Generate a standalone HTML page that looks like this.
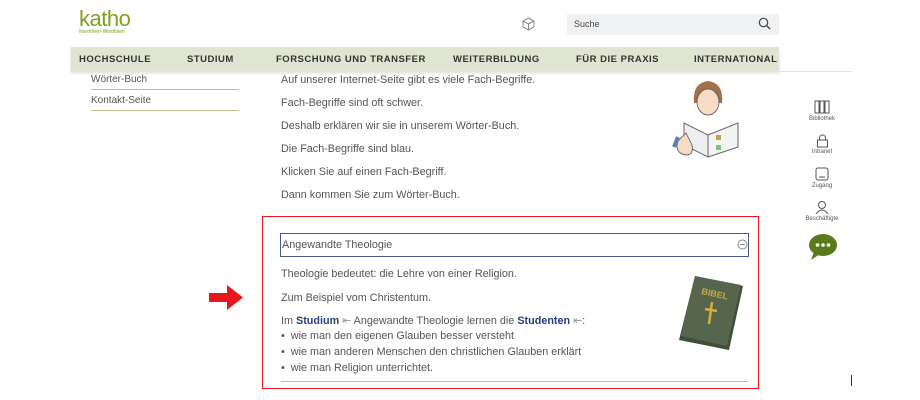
<!DOCTYPE html>
<html><head><meta charset="utf-8"><style>
*{margin:0;padding:0;box-sizing:border-box}
body{width:920px;height:400px;background:#fff;font-family:"Liberation Sans",sans-serif;color:#555;position:relative;overflow:hidden}
.a{position:absolute;white-space:nowrap}
.nav{position:absolute;left:71px;top:47px;width:708px;height:24px;background:#e0e5d2;box-shadow:0 2px 3px rgba(0,0,0,.15)}
.nav span{position:absolute;top:7px;font-size:9.5px;font-weight:bold;letter-spacing:.5px;color:#333}
.t{font-size:10.8px;color:#555}
.ic{position:absolute;font-size:6px;color:#555;text-align:center;width:50px;left:797px}
</style></head><body>
<div class="a" style="left:79px;top:6px;font-size:22px;color:#7fa01e;letter-spacing:-.5px">katho</div>
<div class="a" style="left:79px;top:29px;font-size:5px;color:#7fa01e">Nordrhein-Westfalen</div>
<svg class="a" style="left:522px;top:17px" width="13" height="14" viewBox="0 0 13 14"><path d="M6.5 1 L12 4 V10 L6.5 13 L1 10 V4 Z M1 4 L6.5 7 L12 4 M6.5 7 V13" fill="none" stroke="#888" stroke-width="1"/></svg>
<div class="a" style="left:567px;top:14px;width:212px;height:21px;background:#f0f1f3"></div>
<div class="a" style="left:574px;top:19px;font-size:9px;color:#444">Suche</div>
<svg class="a" style="left:758px;top:17px" width="13" height="13"><circle cx="5.5" cy="5.5" r="4.2" fill="none" stroke="#444" stroke-width="1.2"/><path d="M8.5 8.5 L12 12" stroke="#444" stroke-width="1.3"/></svg>
<div class="nav"><span style="left:8px">HOCHSCHULE</span><span style="left:116px">STUDIUM</span><span style="left:205px">FORSCHUNG UND TRANSFER</span><span style="left:382px">WEITERBILDUNG</span><span style="left:505px">FÜR DIE PRAXIS</span><span style="left:623px">INTERNATIONAL</span></div>
<div class="a" style="left:71px;top:71px;width:781px;height:1px;background:#e5e5e5"></div>
<div class="a t" style="left:91px;top:74px;font-size:10px">Wörter-Buch</div>
<div class="a" style="left:91px;top:89px;width:148px;height:1px;background:#b5c48a"></div>
<div class="a t" style="left:91px;top:95px;font-size:10px">Kontakt-Seite</div>
<div class="a" style="left:91px;top:110px;width:148px;height:1px;background:#b5c48a"></div>
<div class="a t" style="left:281px;top:74px">Auf unserer Internet-Seite gibt es viele Fach-Begriffe.</div>
<div class="a t" style="left:281px;top:97px">Fach-Begriffe sind oft schwer.</div>
<div class="a t" style="left:281px;top:120px">Deshalb erklären wir sie in unserem Wörter-Buch.</div>
<div class="a t" style="left:281px;top:143px">Die Fach-Begriffe sind blau.</div>
<div class="a t" style="left:281px;top:166px">Klicken Sie auf einen Fach-Begriff.</div>
<div class="a t" style="left:281px;top:189px">Dann kommen Sie zum Wörter-Buch.</div>
<svg class="a" style="left:672px;top:75px" width="74" height="86"><path d="M22 28 Q20 8 36 6 Q52 8 50 28 Z" fill="#a0714a"/><ellipse cx="36" cy="27" rx="11" ry="13" fill="#f6dcc4" stroke="#555" stroke-width=".8"/><path d="M12 48 L36 60 L36 82 L12 70Z" fill="#eee" stroke="#666"/><path d="M36 60 L66 48 L66 72 L36 82Z" fill="#f4f4f4" stroke="#666"/><rect x="44" y="60" width="5" height="5" fill="#c9a050"/><rect x="44" y="70" width="5" height="5" fill="#7c7"/><path d="M6 66 Q2 78 14 80 Q22 80 20 70 L14 58Z" fill="#f6dcc4" stroke="#555" stroke-width=".8"/><path d="M6 62 L2 72" stroke="#5a7fb0" stroke-width="4"/></svg>
<div class="a" style="left:262px;top:216px;width:497px;height:173px;border:1.5px solid #e8161d"></div>
<div class="a" style="left:280px;top:233px;width:469px;height:24px;border:1px solid #4a5a8a"></div>
<div class="a t" style="left:282px;top:239px">Angewandte Theologie</div>
<svg class="a" style="left:737px;top:239px" width="11" height="11"><circle cx="5.5" cy="5.5" r="4.5" fill="none" stroke="#888"/><path d="M3 5.5 H8" stroke="#888"/></svg>
<div class="a t" style="left:281px;top:268px">Theologie bedeutet: die Lehre von einer Religion.</div>
<div class="a t" style="left:281px;top:292px">Zum Beispiel vom Christentum.</div>
<div class="a t" style="left:281px;top:314px">Im <b style="color:#2a3d7a">Studium</b> <span style="color:#999">⇤</span> Angewandte Theologie lernen die <b style="color:#2a3d7a">Studenten</b> <span style="color:#999">⇤</span>:</div>
<div class="a t" style="left:281px;top:330px">•&nbsp; wie man den eigenen Glauben besser versteht</div>
<div class="a t" style="left:281px;top:346px">•&nbsp; wie man anderen Menschen den christlichen Glauben erklärt</div>
<div class="a t" style="left:281px;top:362px">•&nbsp; wie man Religion unterrichtet.</div>
<div class="a" style="left:281px;top:381px;width:467px;height:1px;background:#b5c48a"></div>
<svg class="a" style="left:677px;top:274px" width="68" height="78"><path d="M18 2 L66 12 L52 76 L2 66Z" fill="#3f4f3a"/><path d="M18 2 L64 11 L50 72 L4 62Z" fill="#55664d"/><text x="24" y="20" font-size="9" font-weight="bold" fill="#c9a93a" transform="rotate(12 24 20)" font-family="Liberation Sans">BIBEL</text><path d="M35 28 L32 50 M28 35 L40 37" stroke="#d4b03a" stroke-width="2.5"/></svg>
<svg class="a" style="left:209px;top:284px" width="35" height="27"><path d="M0 9 H18 V1 L34 13.5 L18 26 V18 H0Z" fill="#e8161d"/></svg>
<svg class="a" style="left:814px;top:100px" width="16" height="14"><rect x="1" y="1" width="4" height="12" fill="none" stroke="#555"/><rect x="6" y="1" width="4" height="12" fill="none" stroke="#555"/><rect x="11" y="1" width="4" height="12" fill="none" stroke="#555"/></svg>
<div class="ic" style="top:116px">Bibliothek</div>
<svg class="a" style="left:816px;top:134px" width="13" height="14"><path d="M3.5 6 V4 a3 3 0 0 1 6 0 V6" fill="none" stroke="#555"/><rect x="1.5" y="6" width="10" height="7" fill="none" stroke="#555"/></svg>
<div class="ic" style="top:149px">Intranet</div>
<svg class="a" style="left:815px;top:167px" width="14" height="14"><rect x="1" y="1" width="12" height="12" rx="2" fill="none" stroke="#555"/><path d="M4 10 H10" stroke="#555"/></svg>
<div class="ic" style="top:183px">Zugang</div>
<svg class="a" style="left:815px;top:200px" width="14" height="14"><circle cx="7" cy="5" r="3.5" fill="none" stroke="#555"/><path d="M1 14 Q7 6 13 14" fill="none" stroke="#555"/></svg>
<div class="ic" style="top:216px">Beschäftigte</div>
<svg class="a" style="left:808px;top:233px" width="30" height="28"><ellipse cx="15" cy="12" rx="14" ry="11" fill="#5b7a1c"/><path d="M6 19 L3 27 L12 21Z" fill="#5b7a1c"/><circle cx="9.5" cy="12" r="1.8" fill="#fff"/><circle cx="15" cy="12" r="1.8" fill="#fff"/><circle cx="20.5" cy="12" r="1.8" fill="#fff"/></svg>
<div class="a" style="left:851px;top:375px;width:1px;height:11px;background:#333"></div>
</body></html>
